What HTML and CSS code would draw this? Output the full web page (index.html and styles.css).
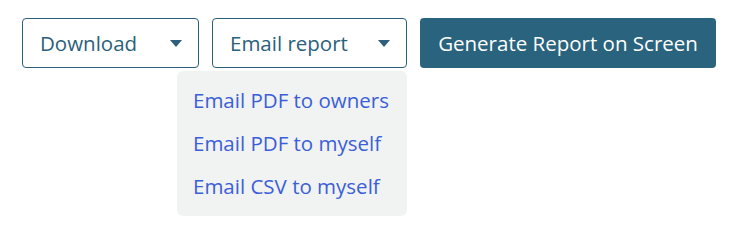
FILE: index.html
```html
<!DOCTYPE html>
<html>
<head>
<meta charset="utf-8">
<link rel="stylesheet" href="styles.css">
</head>
<body>
<div class="toolbar">
  <button class="select select-download">
    <span class="label">Download</span>
    <span class="caret"></span>
  </button>
  <div class="dropdown-wrap">
    <button class="select select-email">
      <span class="label">Email report</span>
      <span class="caret"></span>
    </button>
    <div class="menu">
      <div class="menu-item">Email PDF to owners</div>
      <div class="menu-item">Email PDF to myself</div>
      <div class="menu-item">Email CSV to myself</div>
    </div>
  </div>
  <button class="primary">Generate Report on Screen</button>
</div>
</body>
</html>
```
FILE: styles.css
```css
html, body {
  margin: 0;
  padding: 0;
  background: #ffffff;
}
body {
  font-family: "Open Sans", "Noto Sans", sans-serif;
}
.toolbar {
  display: flex;
  align-items: flex-start;
  gap: 13px;
  padding: 18px 0 0 22px;
}
.select {
  display: flex;
  align-items: center;
  justify-content: space-between;
  flex-shrink: 0;
  box-sizing: border-box;
  height: 50px;
  padding: 0 16px 0 17px;
  border: 1px solid #2b5f7c;
  border-radius: 4px;
  background: #ffffff;
  color: #2b5f7c;
  font-family: inherit;
  font-size: 20.5px;
  cursor: pointer;
}
.select-download { width: 177px; }
.select-email { width: 195px; }
.caret {
  width: 0;
  height: 0;
  border-left: 6.5px solid transparent;
  border-right: 6.5px solid transparent;
  border-top: 7px solid #2b5f7c;
}
.dropdown-wrap {
  flex-shrink: 0;
  width: 195px;
  display: flex;
  flex-direction: column;
  gap: 3px;
}
.menu {
  width: 230px;
  margin-left: -35px;
  box-sizing: border-box;
  padding: 8px 0;
  background: #f1f2f2;
  border-radius: 6px;
}
.menu-item {
  height: 43px;
  line-height: 43px;
  padding-left: 16px;
  color: #3a5fd8;
  font-size: 20.5px;
  white-space: nowrap;
}
.primary {
  flex-shrink: 0;
  box-sizing: border-box;
  width: 296px;
  height: 50px;
  border: none;
  border-radius: 4px;
  background: #29637d;
  color: #ffffff;
  font-family: inherit;
  font-size: 20.5px;
  cursor: pointer;
}
```
